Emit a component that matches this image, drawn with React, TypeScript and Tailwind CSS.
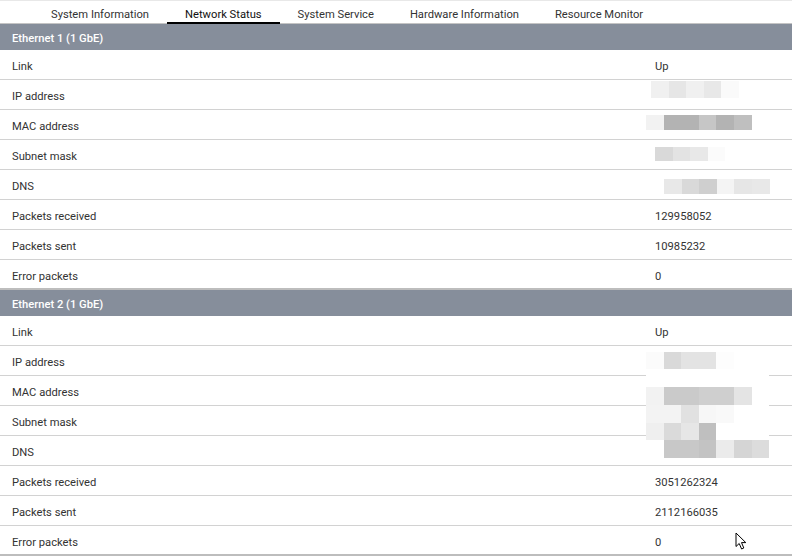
import React from 'react';

type Strip = { x: number; y: number; h: number; colors: string[] };

const tabs = ['System Information', 'Network Status', 'System Service', 'Hardware Information', 'Resource Monitor'];

const sections = [
    {
        title: 'Ethernet 1 (1 GbE)',
        rows: [
            ['Link', 'Up'],
            ['IP address', ''],
            ['MAC address', ''],
            ['Subnet mask', ''],
            ['DNS', ''],
            ['Packets received', '129958052'],
            ['Packets sent', '10985232'],
            ['Error packets', '0'],
        ],
    },
    {
        title: 'Ethernet 2 (1 GbE)',
        rows: [
            ['Link', 'Up'],
            ['IP address', ''],
            ['MAC address', ''],
            ['Subnet mask', ''],
            ['DNS', ''],
            ['Packets received', '3051262324'],
            ['Packets sent', '2112166035'],
            ['Error packets', '0'],
        ],
    },
];

// pixelated (redacted) values
const BLOCK = 17.6;
const strips: Strip[] = [
    { x: 651, y: 81, h: 17, colors: ['#f0f0f0', '#e6e6e6', '#f0f0f0', '#e8e8e8', '#fafafa'] },
    { x: 646, y: 115, h: 15, colors: ['#f2f2f2', '#b3b3b3', '#b3b3b3', '#c6c6c6', '#b3b3b3', '#bfbfbf'] },
    { x: 655, y: 147, h: 14, colors: ['#d9d9d9', '#e3e3e3', '#e8e8e8', '#fbfbfb'] },
    { x: 664, y: 179, h: 15, colors: ['#e8e8e8', '#d9d9d9', '#cfcfcf', '#f4f4f4', '#e6e6e6', '#e8e8e8'] },
    { x: 646, y: 352, h: 18, colors: ['#fbfbfb', '#d9d9d9', '#e3e3e3', '#e3e3e3', '#fdfdfd'] },
    { x: 646, y: 369, h: 18, colors: ['#ffffff', '#ffffff', '#ffffff', '#ffffff', '#ffffff', '#ffffff', '#ffffff'] },
    { x: 646, y: 387, h: 18, colors: ['#f2f2f2', '#cacaca', '#cacaca', '#cfcfcf', '#cfcfcf', '#e4e4e4', '#ffffff'] },
    { x: 646, y: 405, h: 18, colors: ['#f3f3f3', '#f3f3f3', '#e1e1e1', '#f7f7f7', '#f9f9f9', '#ffffff', '#ffffff'] },
    { x: 646, y: 423, h: 17, colors: ['#efefef', '#dadada', '#e6e6e6', '#bfbfbf', '#ffffff', '#ffffff', '#ffffff'] },
    { x: 646, y: 440, h: 18, colors: ['#ffffff', '#c8c8c8', '#c8c8c8', '#c3c3c3', '#ebebeb', '#d5d5d5', '#dcdcdc'] },
];

const App: React.FC = () => {
    return (
        <div
            className="relative w-[792px] h-[557px] overflow-hidden bg-white text-[11.2px] text-[#333333]"
            style={{ fontFamily: 'Roboto, "Liberation Sans", sans-serif' }}
        >
            {/* Tabs */}
            <div className="flex h-[24px] pl-[33px] border-t border-[#e8e8e8] border-b border-b-[#c4c4c4]">
                {tabs.map((t) => (
                    <div key={t} className="relative flex items-center px-[18px] pt-[6px]">
                        <span className={t === 'Network Status' ? 'text-[#111111]' : ''}>{t}</span>
                        {t === 'Network Status' && (
                            <span className="absolute left-0 right-0 bottom-[-1px] h-[2px] bg-black" />
                        )}
                    </div>
                ))}
            </div>

            {sections.map((s) => (
                <div key={s.title}>
                    <div className="flex items-center h-[26px] px-3 pt-[4px] bg-[#868e9b] text-white font-medium">
                        {s.title}
                    </div>
                    {s.rows.map(([label, value], i) => (
                        <div
                            key={label}
                            className={
                                i === s.rows.length - 1
                                    ? 'flex items-center h-[30px] pt-[7px] border-b-2 border-[#bdbdbd]'
                                    : 'flex items-center h-[30px] pt-[5px] border-b border-[#d2d2d2]'
                            }
                        >
                            <div className="w-[655px] pl-3">{label}</div>
                            <div>{value}</div>
                        </div>
                    ))}
                </div>
            ))}

            {/* Redacted values */}
            {strips.map((s, si) =>
                s.colors.map((c, ci) => {
                    const left = Math.round(s.x + ci * BLOCK);
                    const right = Math.round(s.x + (ci + 1) * BLOCK);
                    return (
                        <div
                            key={`${si}-${ci}`}
                            className="absolute"
                            style={{ left, top: s.y, width: right - left, height: s.h, background: c }}
                        />
                    );
                })
            )}

            {/* Mouse cursor */}
            <svg className="absolute left-[735px] top-[532px]" width="13" height="19" viewBox="0 0 13 19">
                <path
                    d="M1 1 L1 14.5 L4.2 11.5 L6.6 17 L8.8 16 L6.5 10.6 L10.8 10.6 Z"
                    fill="#ffffff"
                    stroke="#000000"
                    strokeWidth="1"
                    strokeLinejoin="round"
                />
            </svg>
        </div>
    );
};

export default App;
